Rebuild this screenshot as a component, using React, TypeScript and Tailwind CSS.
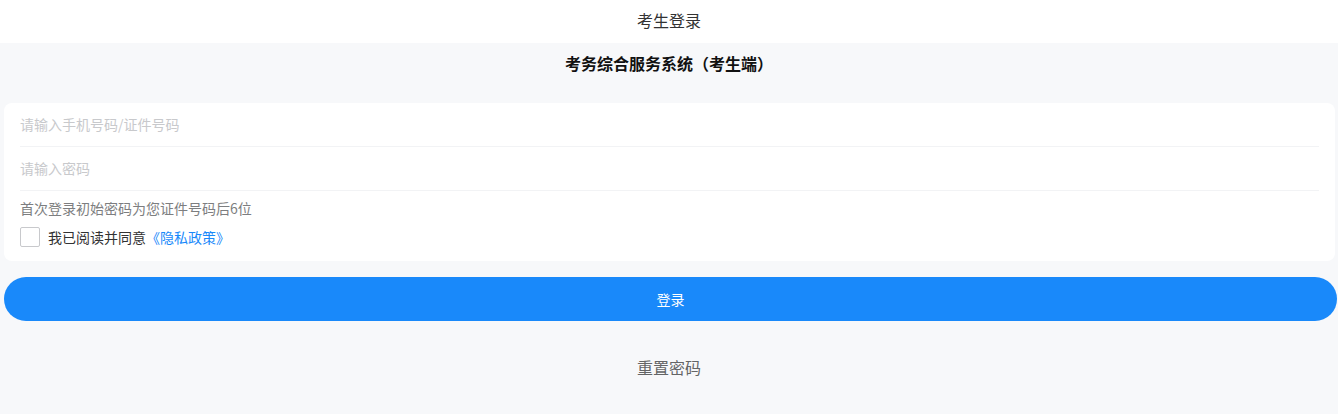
import React from "react";

export default function App() {
  const font = { fontFamily: '"Noto Sans CJK SC", "Noto Sans", sans-serif' };
  return (
    <div style={font} className="w-[1338px] h-[414px] bg-[#f7f8fa] flex flex-col overflow-hidden">
      <div className="h-[43px] pb-[4px] bg-white flex items-center justify-center text-[16px] text-[#323233] shrink-0">
        考生登录
      </div>
      <div className="pt-[9px] h-[60px] text-center text-[16px] leading-[22px] font-bold text-[#111]">
        考务综合服务系统（考生端）
      </div>
      <div className="mx-1 w-[1331px] bg-white rounded-[8px] pb-[14px]">
        <div className="mx-4 h-[44px] flex items-center border-b border-[#f2f3f5]">
          <span className="text-[14px] text-[#c8c9cc]">请输入手机号码/证件号码</span>
        </div>
        <div className="mx-4 h-[44px] flex items-center border-b border-[#f2f3f5]">
          <span className="text-[14px] text-[#c8c9cc]">请输入密码</span>
        </div>
        <div className="px-4 pt-[7px] text-[14px] leading-[20px] text-[#7d7e80]">
          首次登录初始密码为您证件号码后6位
        </div>
        <div className="px-4 mt-[9px] flex items-center h-[20px]">
          <div className="w-[20px] h-[20px] border border-[#c8c9cc] rounded-[2px] bg-white" />
          <span className="ml-[8px] text-[14px] text-[#323233]">
            我已阅读并同意<span className="text-[#1989fa]">《隐私政策》</span>
          </span>
        </div>
      </div>
      <div className="ml-1 w-[1333px] mt-[16px] h-[44px] rounded-full bg-[#1989fa] flex items-center justify-center text-white text-[14px]">
        登录
      </div>
      <div className="mt-[35px] text-center text-[16px] leading-[22px] text-[#646566]">
        重置密码
      </div>
    </div>
  );
}
